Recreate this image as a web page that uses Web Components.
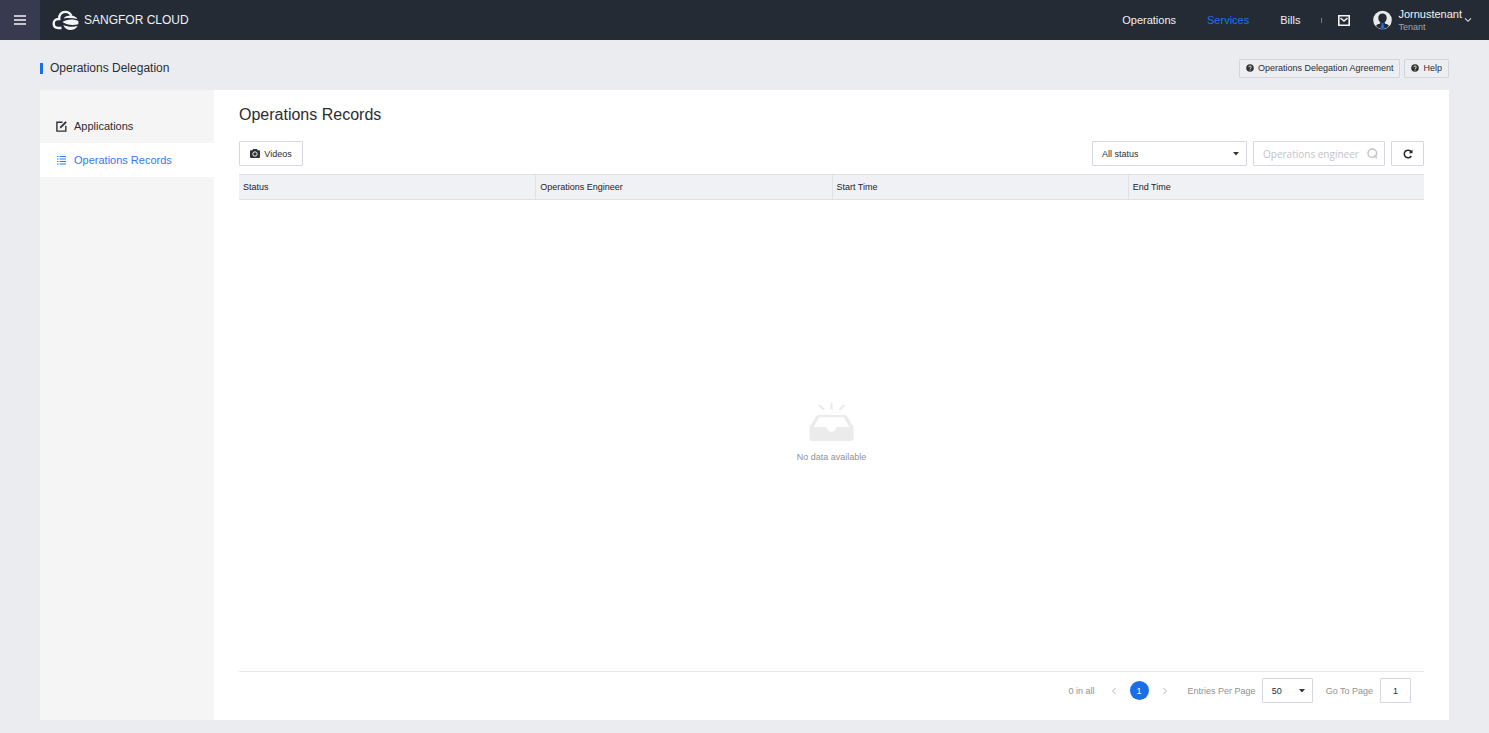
<!DOCTYPE html>
<html lang="en">
<head>
<meta charset="utf-8">
<title>Operations Delegation</title>
<style>
  :root {
    --blue: #1a6fe8;
    --line: #d5d8e0;
    --ink: #2b2d33;
    --muted: #929292;
    --small: 9px;
    --medium: 11px;
    --large: 12px;
  }
  body {
    margin: 0;
    background: #ebecf0;
    color: var(--ink);
    font: 9px/12px "Liberation Sans", Arial, sans-serif;
  }
</style>
</head>
<body>
<cloud-page></cloud-page>

<script>
const define = (name, html, setup) => {
  const template = document.createElement('template');
  template.innerHTML = '<style>*{box-sizing:border-box}svg{display:block;flex:none}button,input,select{font:inherit;color:inherit;margin:0}</style>' + html;
  customElements.define(name, class extends HTMLElement {
    constructor() {
      super();
      this.attachShadow({ mode: 'open' }).append(template.content.cloneNode(true));
    }
    connectedCallback() { if (setup) setup(this, this.shadowRoot); }
  });
};

define('cloud-logo', `
  <style>
    :host { display: block; }
    a { display: flex; align-items: center; gap: 5px; color: #f0f1f3; text-decoration: none; font-size: var(--large); line-height: 16px; }
  </style>
  <a href="#">
    <svg width="27" height="20" viewBox="0 0 27 20" fill="none" aria-hidden="true">
      <path d="M9.500 18H6.200C3.500 18 1.700 16.200 1.700 13.500c0-2.600 1.900-4.500 4.700-4.500h.8C6.900 4.700 9.500 1.900 13.200 1.900c3.100 0 5.200 1.500 6.100 3.900" stroke="#f4f5f6" stroke-width="2.400"/>
      <path d="M11.600 8.400C13 6.600 15.500 5.600 18.600 5.600c3.200 0 5.600 1.400 6.800 3.500-4.300-1.300-9.500-1.500-13.800-.7Z" fill="#f4f5f6"/>
      <path d="M10.500 12c3.600-3 11.500-3.300 15.700-1 .4 1.100.3 2.300 0 3.200-4.700 1.500-11.600 1-15.700-2.200Z" fill="#f4f5f6"/>
      <path d="M11.300 14.900c4 1.900 9 2.300 14.300 1.100-1.400 2.500-4 3.900-7 3.900-3.400 0-6-1.800-7.300-5Z" fill="#f4f5f6"/>
    </svg>
    <span>SANGFOR CLOUD</span>
  </a>`);

define('user-menu', `
  <style>
    :host { display: block; }
    button { display: flex; align-items: center; padding: 0; border: 0; background: none; text-align: left; color: #f0f1f3; }
    .names { display: grid; margin: 0 2px 0 6px; font-size: var(--medium); line-height: 14px; }
    small { font-size: var(--small); line-height: 12px; color: #a3a5aa; }
  </style>
  <button type="button">
    <svg width="19" height="20" viewBox="0 0 19 20" aria-hidden="true">
      <circle cx="9.500" cy="10" r="9.300" fill="#e9eaec"/>
      <path d="M9.500 3.500c-2.700 0-4.200 1.800-4.200 4.200 0 2 .8 3.700 2.100 4.700-.1.900-.7 1.300-1.900 1.700-1.100.4-2 .9-2.500 2A9.300 9.300 0 0 0 9.500 19.300 9.300 9.300 0 0 0 16 16.100c-.5-1.100-1.400-1.600-2.500-2-1.200-.4-1.800-.8-1.900-1.700 1.300-1 2.100-2.700 2.100-4.700 0-2.400-1.500-4.200-4.200-4.200Z" fill="#242b35"/>
      <path d="M8.100 13.200h2.800l-.5 1.300 1 3.300-1.900 1.500-1.900-1.500 1-3.300Z" fill="#1a6fe8"/>
    </svg>
    <span class="names"><span>Jornustenant</span><small>Tenant</small></span>
    <svg width="8" height="6" viewBox="0 0 8 6" aria-hidden="true"><path d="m1 1.300 3 3 3-3" fill="none" stroke="#dcdde0" stroke-width="1.100"/></svg>
  </button>`);

define('cloud-header', `
  <style>
    :host { display: flex; align-items: center; height: 40px; background: #242b35; padding-right: 17px; }
    .menu { width: 40px; height: 40px; display: grid; place-items: center; border: 0; padding: 0; background: #383b4f; }
    cloud-logo { margin: 0 auto 0 12px; }
    nav { display: flex; gap: 31px; font-size: var(--medium); line-height: 16px; }
    nav a { color: #f0f1f3; text-decoration: none; }
    nav a[aria-current] { color: #1f72f2; }
    i { width: 1px; height: 5px; background: #777c84; margin: 0 16px 0 21px; }
    .mail { display: grid; border: 0; padding: 0; background: none; margin-right: 23px; }
  </style>
  <button class="menu" type="button" aria-label="Menu">
    <svg width="12" height="10" viewBox="0 0 12 10"><path d="M0 1h12M0 5h12M0 9h12" stroke="#f4f4f6" stroke-width="1.600"/></svg>
  </button>
  <cloud-logo></cloud-logo>
  <nav aria-label="Main"><a href="#">Operations</a><a href="#" aria-current="page">Services</a><a href="#">Bills</a></nav>
  <i></i>
  <button class="mail" type="button" aria-label="Messages">
    <svg width="12" height="11" viewBox="0 0 12 11"><path d="M.8.800h10.400v9.400H.8ZM2.500 3 6 6l3.500-3" fill="none" stroke="#f4f5f6" stroke-width="1.600"/></svg>
  </button>
  <user-menu></user-menu>`);

define('help-button', `
  <style>
    :host { display: block; }
    button { display: flex; align-items: center; gap: 4px; height: 19px; padding: 0 6px; border: 1px solid #d3d5da; border-radius: 1px; background: #edeef1; white-space: nowrap; }
  </style>
  <button type="button">
    <svg width="8" height="8" viewBox="0 0 8 8" aria-hidden="true"><circle cx="4" cy="4" r="3.800" fill="#333"/><path d="M2.800 3.100c.1-1.500 2.500-1.500 2.500 0C5.300 4 4.100 3.900 4.100 5M4.100 5.700v.9" fill="none" stroke="#edeef1" stroke-width=".9"/></svg>
    <slot></slot>
  </button>`);

define('page-title', `
  <style>
    :host { display: flex; align-items: center; gap: 4px; height: 20px; }
    h1 { margin: 0 auto 0 0; padding-left: 3px; font-size: var(--large); line-height: 16px; font-weight: 400; }
    i { width: 3px; height: 11px; background: var(--blue); }
  </style>
  <i></i><h1>Operations Delegation</h1>
  <help-button>Operations Delegation Agreement</help-button>
  <help-button>Help</help-button>`);

define('side-item', `
  <style>
    :host { display: block; }
    a { display: flex; align-items: center; gap: 7px; height: 34px; padding-left: 16px; color: inherit; text-decoration: none; font-size: var(--medium); line-height: 14px; }
    :host([current]) a { background: #fff; color: #2f7bf0; }
  </style>
  <a href="#"><slot name="icon"></slot><span><slot></slot></span></a>`);

define('side-nav', `
  <style>
    :host { display: block; width: 174px; flex: none; background: #f5f5f5; padding-top: 19px; }
  </style>
  <nav aria-label="Operations delegation">
    <side-item>
      <svg slot="icon" width="11" height="11" viewBox="0 0 11 11" aria-hidden="true"><path d="M6.500 1.200H.9v8.900h8.900V4.700" fill="none" stroke="#303238" stroke-width="1.400"/><path d="m3.700 7.400.5-2L9.400.2l1.400 1.300-5.200 5.300Z" fill="#303238"/></svg>
      Applications
    </side-item>
    <side-item current>
      <svg slot="icon" width="11" height="10" viewBox="0 0 11 10" aria-hidden="true"><path d="M1 1.500h1.500M1 4h1.500M1 6.500h1.500M1 9h1.500M3.500 1.500H10M3.500 4H10M3.500 6.500H10M3.500 9H10" stroke="#2f7bf0" stroke-width="1"/></svg>
      Operations Records
    </side-item>
  </nav>`);

define('drop-down', `
  <style>
    :host { display: block; position: relative; }
    select { appearance: none; width: 100%; height: 25px; padding: 0 20px 0 9px; border: 1px solid var(--line); border-radius: 1px; background: #fff; outline: 0; }
    svg { position: absolute; right: 8px; top: 11px; pointer-events: none; }
  </style>
  <select></select>
  <svg width="6" height="4" viewBox="0 0 6 4" aria-hidden="true"><path d="M0 0h6L3 3.500Z" fill="#33353b"/></svg>`,
  (host, root) => {
    const select = root.querySelector('select');
    select.setAttribute('aria-label', host.getAttribute('label'));
    select.replaceChildren(...host.getAttribute('options').split(',').map(text => new Option(text)));
  });

define('records-toolbar', `
  <style>
    :host { display: flex; gap: 6px; }
    button { height: 25px; border: 1px solid var(--line); border-radius: 1px; background: #fff; display: flex; align-items: center; justify-content: center; gap: 4px; padding: 0 9px; }
    .videos { margin-right: auto; width: 64px; }
    drop-down { width: 155px; }
    label { display: flex; align-items: center; width: 132px; height: 25px; padding: 0 6px 0 9px; border: 1px solid var(--line); border-radius: 1px; }
    input { flex: 1; min-width: 0; height: 20px; padding: 0; border: 0; outline: 0; background: none; font: 10px/14px "Open Sans", sans-serif; }
    input::placeholder { color: #c3c4c8; opacity: 1; }
    .reload { width: 33px; padding: 0; }
  </style>
  <button class="videos" type="button">
    <svg width="10" height="9" viewBox="0 0 10 9" aria-hidden="true"><path d="M3 0h4l.7 1.300H9q1 0 1 1V8q0 1-1 1H1Q0 9 0 8V2.300q0-1 1-1h1.300Z" fill="#303238"/><circle cx="5" cy="5" r="2.200" fill="none" stroke="#fff" stroke-width=".9"/></svg>
    Videos
  </button>
  <drop-down label="Status" options="All status"></drop-down>
  <label>
    <input type="text" placeholder="Operations engineer" aria-label="Operations engineer">
    <svg width="11" height="11" viewBox="0 0 11 11" aria-hidden="true"><circle cx="5.300" cy="5.300" r="4.300" fill="none" stroke="#c3c4c8" stroke-width="1.500"/><path d="m7.300 7.300 2.700 2.700" stroke="#c3c4c8" stroke-width="1.500"/></svg>
  </label>
  <button class="reload" type="button" aria-label="Refresh">
    <svg width="10" height="10" viewBox="0 0 10 10"><path d="M8.300 7A3.800 3.800 0 1 1 8.200 2.800" fill="none" stroke="#25272c" stroke-width="1.500"/><path d="M9.500.6v3.700H5.800Z" fill="#25272c"/></svg>
  </button>`);

define('records-table', `
  <style>
    :host { display: flex; flex-direction: column; flex: 1; }
    table { width: 100%; table-layout: fixed; border-collapse: separate; border-spacing: 0; }
    th { height: 26px; padding: 0 4px; text-align: left; font-weight: 400; color: #1f2127; background: #f0f1f5; border: solid #dfe1e7; border-width: 1px 0; }
    th + th { border-left-width: 1px; }
    .empty { flex: 1; display: flex; flex-direction: column; align-items: center; justify-content: center; gap: 9px; padding-bottom: 6px; color: var(--muted); }
    p { margin: 0; }
  </style>
  <table><thead><tr><th scope="col">Status</th><th scope="col">Operations Engineer</th><th scope="col">Start Time</th><th scope="col">End Time</th></tr></thead></table>
  <div class="empty">
    <svg width="46" height="40" viewBox="0 0 46 40" aria-hidden="true">
      <path d="M22.500.5v7M10 3l5 4.800M35.500 3l-5 4.800" stroke="#ebebeb" stroke-width="2.200" fill="none"/>
      <path fill-rule="evenodd" d="M9.500 13h26q1.800 0 2.700 1.500L44.500 25v11.500q0 2.500-2.500 2.500H3Q.5 39 .5 36.500V25l6.300-10.500Q7.700 13 9.500 13Zm.8 2.300L4.500 25H17c1 0 1 4.800 5.500 4.800S27 25 28 25h12.500l-5.800-9.700Z" fill="#ebebeb"/>
    </svg>
    <p>No data available</p>
  </div>`);

define('records-pager', `
  <style>
    :host { display: flex; align-items: center; justify-content: flex-end; padding: 6px 13px 0 0; border-top: 1px solid #e9eaed; color: var(--muted); }
    .step { display: grid; place-items: center; width: 8px; height: 16px; padding: 0; border: 0; background: none; }
    .page { width: 19px; height: 19px; margin: 0 12px; padding: 0; border: 0; border-radius: 50%; background: var(--blue); color: #fff; }
    .total { margin-right: 15px; }
    .size { margin: 0 6px 0 19px; }
    drop-down { width: 51px; margin-right: 13px; color: var(--ink); }
    label { display: flex; align-items: center; gap: 7px; }
    input { width: 31px; height: 25px; padding: 0; text-align: center; border: 1px solid var(--line); border-radius: 1px; color: var(--ink); outline: 0; }
  </style>
  <span class="total">0 in all</span>
  <button class="step" type="button" aria-label="Previous"><svg width="6" height="8" viewBox="0 0 6 8"><path d="M4.500 1 1.500 4l3 3" fill="none" stroke="#b5b5b5"/></svg></button>
  <button class="page" type="button">1</button>
  <button class="step" type="button" aria-label="Next"><svg width="6" height="8" viewBox="0 0 6 8"><path d="m1.500 1 3 3-3 3" fill="none" stroke="#b5b5b5"/></svg></button>
  <span class="size">Entries Per Page</span>
  <drop-down label="Entries Per Page" options="50"></drop-down>
  <label>Go To Page <input type="text" value="1"></label>`);

define('cloud-page', `
  <style>
    :host { display: flex; flex-direction: column; min-height: 100vh; }
    page-title { margin: 18px 40px 12px; }
    .panel { flex: 1; display: flex; margin: 0 40px 13px; background: #fff; }
    main { flex: 1; min-width: 0; display: flex; flex-direction: column; padding: 15px 25px 17px; }
    h2 { margin: 0 0 16px; font-size: 16px; line-height: 20px; font-weight: 400; }
    records-table { margin-top: 8px; }
  </style>
  <cloud-header></cloud-header>
  <page-title></page-title>
  <div class="panel">
    <side-nav></side-nav>
    <main>
      <h2>Operations Records</h2>
      <records-toolbar></records-toolbar>
      <records-table></records-table>
      <records-pager></records-pager>
    </main>
  </div>`);
</script>
</body>
</html>
